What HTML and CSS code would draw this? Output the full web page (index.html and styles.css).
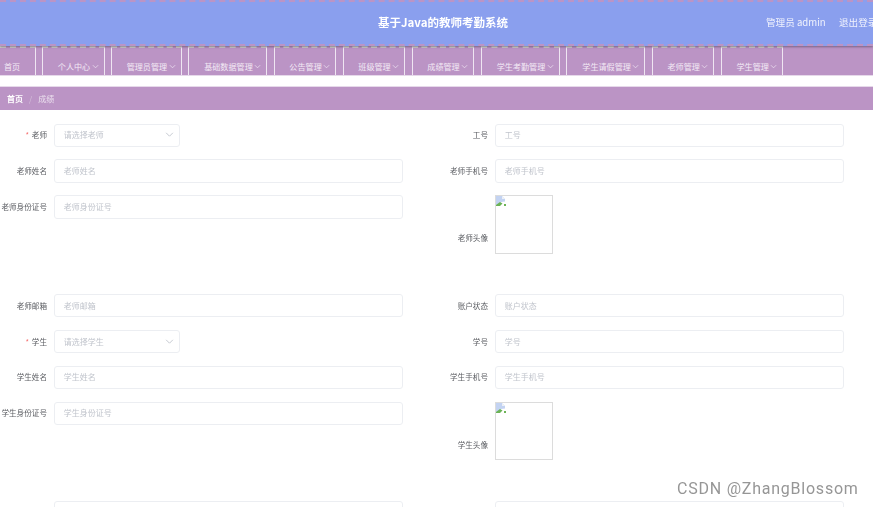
FILE: index.html
```html
<!DOCTYPE html>
<html lang="en">
<head>
    <meta charset="UTF-8">
    <meta name="viewport" content="width=device-width, initial-scale=1.0">
    <title>基于Java的教师考勤系统</title>
    <link rel="stylesheet" href="styles.css">
</head>
<body>
    <!-- Top bar -->
    <header class="top-bar">
        <div class="top-title">基于Java的教师考勤系统</div>
        <div class="top-user">管理员 admin</div>
        <div class="top-logout">退出登录</div>
    </header>

    <!-- Menu -->
    <nav class="menu">
        <a class="menu-item menu-home">首页</a>
        <a class="menu-item w62">个人中心<svg class="arrow" viewBox="0 0 8 8"><path d="M1 2.5l3 3 3-3"/></svg></a>
        <a class="menu-item w71">管理员管理<svg class="arrow" viewBox="0 0 8 8"><path d="M1 2.5l3 3 3-3"/></svg></a>
        <a class="menu-item w80">基础数据管理<svg class="arrow" viewBox="0 0 8 8"><path d="M1 2.5l3 3 3-3"/></svg></a>
        <a class="menu-item w62">公告管理<svg class="arrow" viewBox="0 0 8 8"><path d="M1 2.5l3 3 3-3"/></svg></a>
        <a class="menu-item w62">班级管理<svg class="arrow" viewBox="0 0 8 8"><path d="M1 2.5l3 3 3-3"/></svg></a>
        <a class="menu-item w62">成绩管理<svg class="arrow" viewBox="0 0 8 8"><path d="M1 2.5l3 3 3-3"/></svg></a>
        <a class="menu-item w80">学生考勤管理<svg class="arrow" viewBox="0 0 8 8"><path d="M1 2.5l3 3 3-3"/></svg></a>
        <a class="menu-item w80">学生请假管理<svg class="arrow" viewBox="0 0 8 8"><path d="M1 2.5l3 3 3-3"/></svg></a>
        <a class="menu-item w62">老师管理<svg class="arrow" viewBox="0 0 8 8"><path d="M1 2.5l3 3 3-3"/></svg></a>
        <a class="menu-item w62">学生管理<svg class="arrow" viewBox="0 0 8 8"><path d="M1 2.5l3 3 3-3"/></svg></a>
    </nav>

    <!-- Breadcrumb -->
    <div class="crumb">
        <span class="crumb-home">首页</span>
        <span class="crumb-sep">/</span>
        <span class="crumb-now">成绩</span>
    </div>

    <!-- Form -->
    <form class="form-grid">
        <div class="field">
            <label class="field-label"><i class="req">*</i> 老师</label>
            <div class="select-box"><span>请选择老师</span><svg class="select-arrow" viewBox="0 0 8 8"><path d="M1 2.5l3 3 3-3"/></svg></div>
        </div>
        <div class="field">
            <label class="field-label">工号</label>
            <input class="input-field" placeholder="工号">
        </div>

        <div class="field">
            <label class="field-label">老师姓名</label>
            <input class="input-field" placeholder="老师姓名">
        </div>
        <div class="field">
            <label class="field-label">老师手机号</label>
            <input class="input-field" placeholder="老师手机号">
        </div>

        <div class="field">
            <label class="field-label">老师身份证号</label>
            <input class="input-field" placeholder="老师身份证号">
        </div>
        <div class="field field-photo">
            <label class="field-label">老师头像</label>
            <div class="photo"><svg class="broken" viewBox="0 0 10 10"><path class="broken-sky" d="M0 0h6l3 3v2.5L5 6 1.5 9H0z"/><path class="broken-fold" d="M6 0v3h3z"/><path class="broken-hill" d="M0 10V9l4-3 2.5 1.5L4 10z"/><path class="broken-hill" d="M8 8h2v2H8z"/></svg></div>
        </div>

        <div class="field">
            <label class="field-label">老师邮箱</label>
            <input class="input-field" placeholder="老师邮箱">
        </div>
        <div class="field">
            <label class="field-label">账户状态</label>
            <input class="input-field" placeholder="账户状态">
        </div>

        <div class="field">
            <label class="field-label"><i class="req">*</i> 学生</label>
            <div class="select-box"><span>请选择学生</span><svg class="select-arrow" viewBox="0 0 8 8"><path d="M1 2.5l3 3 3-3"/></svg></div>
        </div>
        <div class="field">
            <label class="field-label">学号</label>
            <input class="input-field" placeholder="学号">
        </div>

        <div class="field">
            <label class="field-label">学生姓名</label>
            <input class="input-field" placeholder="学生姓名">
        </div>
        <div class="field">
            <label class="field-label">学生手机号</label>
            <input class="input-field" placeholder="学生手机号">
        </div>

        <div class="field">
            <label class="field-label">学生身份证号</label>
            <input class="input-field" placeholder="学生身份证号">
        </div>
        <div class="field field-photo">
            <label class="field-label">学生头像</label>
            <div class="photo"><svg class="broken" viewBox="0 0 10 10"><path class="broken-sky" d="M0 0h6l3 3v2.5L5 6 1.5 9H0z"/><path class="broken-fold" d="M6 0v3h3z"/><path class="broken-hill" d="M0 10V9l4-3 2.5 1.5L4 10z"/><path class="broken-hill" d="M8 8h2v2H8z"/></svg></div>
        </div>

        <div class="field">
            <label class="field-label"></label>
            <input class="input-field">
        </div>
        <div class="field">
            <label class="field-label"></label>
            <input class="input-field">
        </div>
    </form>

    <div class="watermark">CSDN @ZhangBlossom</div>
</body>
</html>
```

FILE: styles.css
```css
:root {
    --top-bg-color: #8a9fee;
    --purple-color: #bb94c5;
    --label-color: #5c5e63;
    --placeholder-color: #c0c4cc;
    --border-color: #eceef2;
}

body {
    margin: 0;
    padding: 0;
    height: 507px;
    overflow: hidden;
    background-color: #ffffff;
    font-family: "Noto Sans CJK SC", "Liberation Sans", sans-serif;
    filter: blur(0.35px);
}

/* Top bar */
.top-bar {
    position: relative;
    z-index: 1;
    display: flex;
    align-items: center;
    height: 46px;
    box-sizing: border-box;
    padding: 0 0 2px 378px;
    white-space: nowrap;
    background-color: var(--top-bg-color);
    border-top: 2px dashed var(--purple-color);
    border-bottom: 2px dashed var(--purple-color);
    box-shadow: 0 1px 2px rgba(70, 60, 80, 0.55);
    color: #ffffff;
}

.top-title {
    flex-shrink: 0;
    width: 388px;
    font-size: 11.5px;
    font-weight: bold;
}

.top-user {
    flex-shrink: 0;
    width: 73px;
    font-family: "Noto Sans CJK SC", "Open Sans", sans-serif;
    font-size: 9.6px;
    color: #f0f2fd;
}

.top-logout {
    flex-shrink: 0;
    font-size: 9.6px;
    color: #f0f2fd;
}

/* Menu */
.menu {
    display: flex;
    gap: 6.3px;
    height: 30px;
    box-sizing: border-box;
    overflow: hidden;
    background-color: var(--purple-color);
    border-bottom: 1px solid #e6d9ea;
}

.menu-item {
    display: flex;
    align-items: center;
    justify-content: flex-end;
    flex-shrink: 0;
    box-sizing: border-box;
    height: 29px;
    padding: 9px 5px 0 0;
    font-size: 8.1px;
    color: #f3eaf5;
    border-top: 2px dashed #d2d2ce;
    border-left: 1px solid #efe6f2;
    border-right: 1px solid #efe6f2;
}

.menu-home {
    width: 35.7px;
    justify-content: flex-start;
    padding-left: 4px;
    border-left: none;
}

.w62 { width: 62.7px; }
.w71 { width: 70.7px; }
.w80 { width: 79.3px; }

.arrow {
    width: 7px;
    height: 7px;
    margin-left: 1.5px;
}

.arrow path,
.select-arrow path {
    fill: none;
    stroke: #f3eaf5;
    stroke-width: 0.8;
}

/* Breadcrumb */
.crumb {
    display: flex;
    align-items: center;
    gap: 6px;
    height: 24px;
    margin-top: 10px;
    padding: 0 0 1px 7px;
    font-size: 8px;
    background-color: var(--purple-color);
    border-top: 1px solid #e6d9ea;
    box-sizing: border-box;
}

.crumb-home {
    font-weight: bold;
    color: #ffffff;
}

.crumb-sep {
    color: #d5c0da;
}

.crumb-now {
    color: #ebe0ee;
}

/* Form */
.form-grid {
    display: grid;
    grid-template-columns: 441px 1fr;
    row-gap: 12.6px;
    align-items: start;
    padding-top: 13.5px;
}

.field {
    display: flex;
    align-items: center;
    gap: 7.3px;
    height: 23.3px;
}

.field-photo {
    height: 86.2px;
}

.field-label {
    flex-shrink: 0;
    width: 47px;
    padding-bottom: 1px;
    text-align: right;
    white-space: nowrap;
    font-size: 7.6px;
    color: var(--label-color);
}

.req {
    font-style: normal;
    color: #f56c6c;
    margin-right: 1px;
}

.input-field,
.select-box {
    box-sizing: border-box;
    width: 349px;
    height: 23.3px;
    padding: 0 9px 1px 8.5px;
    border: 1px solid var(--border-color);
    border-radius: 3px;
    background-color: #ffffff;
    font-family: inherit;
    font-size: 8px;
    outline: none;
}

.input-field::placeholder {
    color: var(--placeholder-color);
}

.select-box {
    display: flex;
    align-items: center;
    justify-content: space-between;
    width: 126px;
    padding-right: 5px;
    color: var(--placeholder-color);
}

.select-arrow {
    width: 9px;
    height: 9px;
}

.select-arrow path {
    stroke: var(--placeholder-color);
}

.photo {
    align-self: flex-start;
    box-sizing: border-box;
    width: 58px;
    height: 58.3px;
    border: 1px solid #dcdcdc;
}

.broken {
    display: block;
    width: 10px;
    height: 10px;
}

.broken-sky {
    fill: #c3d3f2;
}

.broken-fold {
    fill: #eef1f6;
}

.broken-hill {
    fill: #6cb356;
}

.watermark {
    position: absolute;
    left: 677px;
    top: 479px;
    font-family: "Roboto", sans-serif;
    font-size: 16px;
    letter-spacing: 0.77px;
    white-space: nowrap;
    color: #969696;
}
```
